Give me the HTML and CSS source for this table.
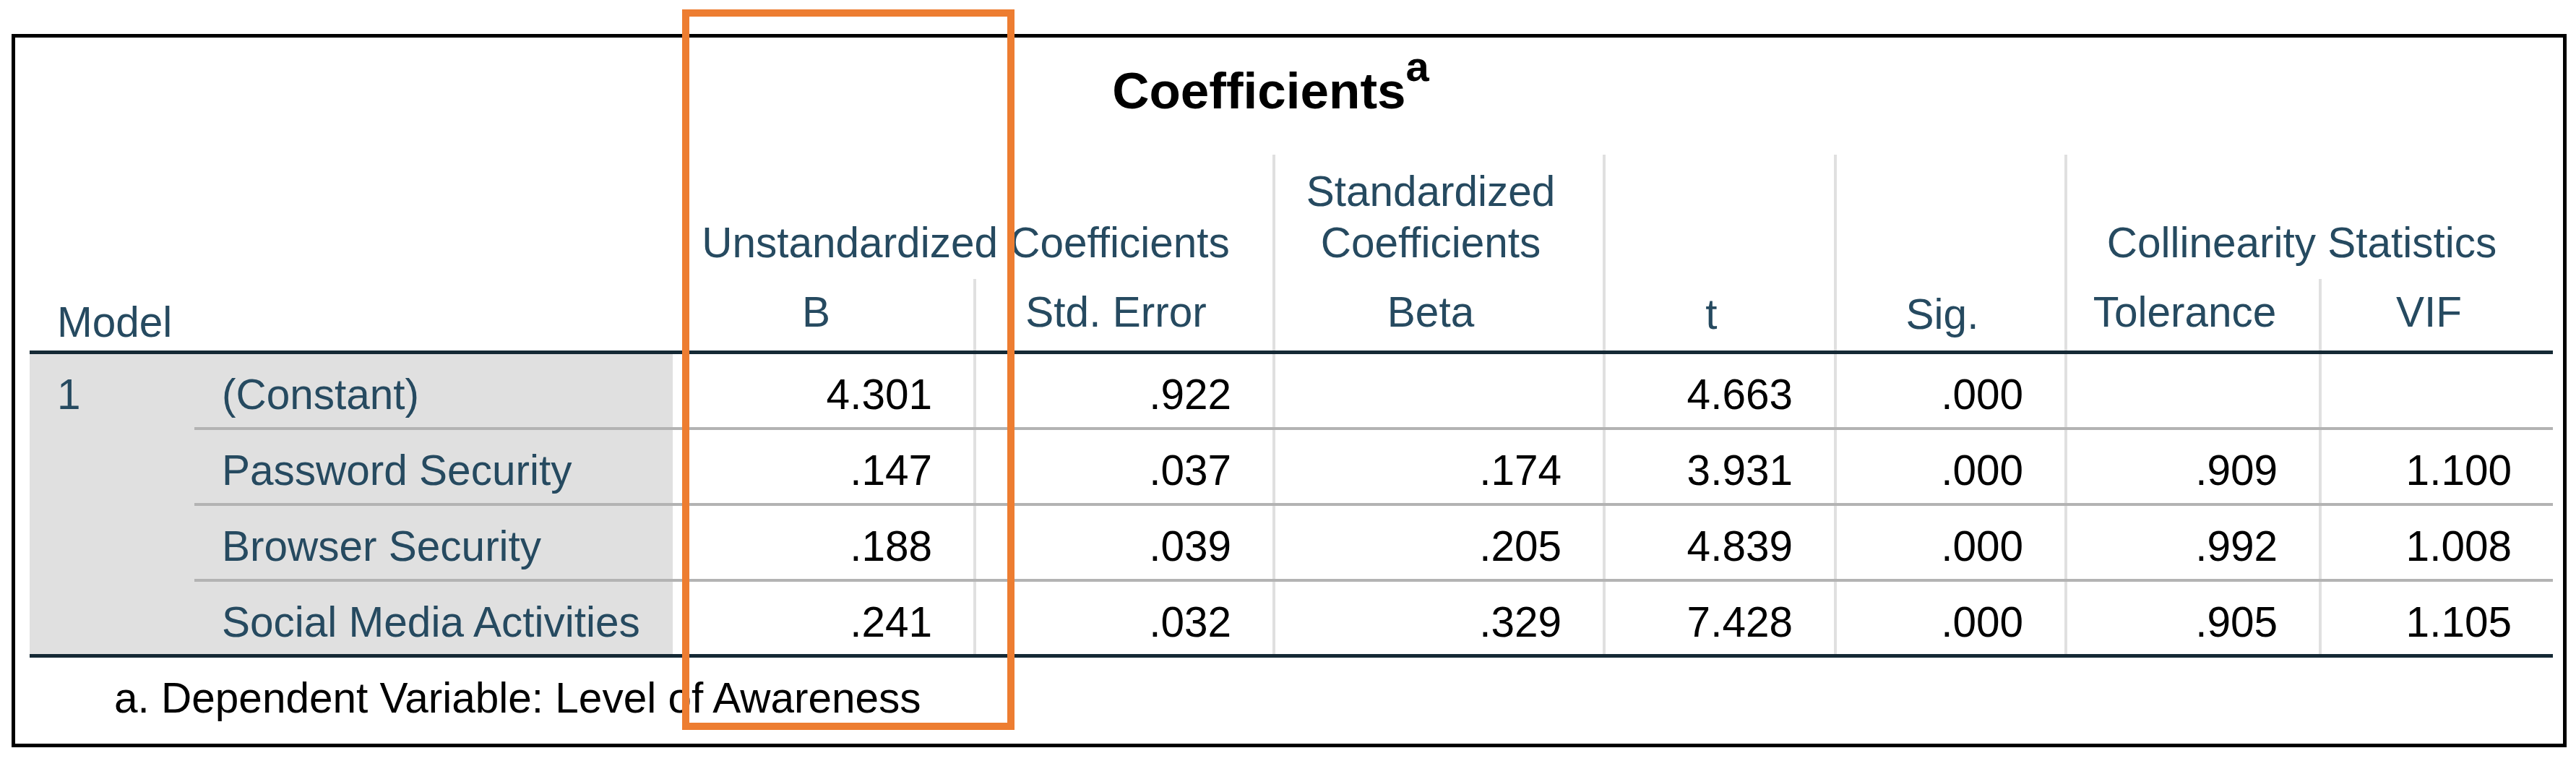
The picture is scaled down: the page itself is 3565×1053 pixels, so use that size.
FILE: index.html
```html
<!DOCTYPE html>
<html lang="en">
<head>
<meta charset="utf-8">
<title>Coefficients</title>
<link rel="stylesheet" href="styles.css">
</head>
<body>
<div class="page">
  <div class="frame">
    <div class="title">Coefficients<span class="fn">a</span></div>
    <div class="grid">
      <div class="h model">Model</div>
      <div class="h unstd">Unstandardized Coefficients</div>
      <div class="h std vl">Standardized<br>Coefficients</div>
      <div class="h tcol vl">t</div>
      <div class="h sig vl">Sig.</div>
      <div class="h coll vl">Collinearity Statistics</div>
      <div class="h sub cb">B</div>
      <div class="h sub cse vl">Std. Error</div>
      <div class="h sub cbeta vl">Beta</div>
      <div class="h sub ctol vl">Tolerance</div>
      <div class="h sub cvif vl">VIF</div>
      <div class="mnum">1</div>
      <div class="row first">
        <div class="lab">(Constant)</div>
        <div>4.301</div>
        <div class="vl">.922</div>
        <div class="vl"></div>
        <div class="vl">4.663</div>
        <div class="vl">.000</div>
        <div class="vl"></div>
        <div class="vl"></div>
      </div>
      <div class="row">
        <div class="lab">Password Security</div>
        <div>.147</div>
        <div class="vl">.037</div>
        <div class="vl">.174</div>
        <div class="vl">3.931</div>
        <div class="vl">.000</div>
        <div class="vl">.909</div>
        <div class="vl">1.100</div>
      </div>
      <div class="row">
        <div class="lab">Browser Security</div>
        <div>.188</div>
        <div class="vl">.039</div>
        <div class="vl">.205</div>
        <div class="vl">4.839</div>
        <div class="vl">.000</div>
        <div class="vl">.992</div>
        <div class="vl">1.008</div>
      </div>
      <div class="row last">
        <div class="lab">Social Media Activities</div>
        <div>.241</div>
        <div class="vl">.032</div>
        <div class="vl">.329</div>
        <div class="vl">7.428</div>
        <div class="vl">.000</div>
        <div class="vl">.905</div>
        <div class="vl">1.105</div>
      </div>
    </div>
    <div class="foot">a. Dependent Variable: Level of Awareness</div>
  </div>
  <div class="mark"></div>
</div>
</body>
</html>
```

FILE: styles.css
```css
* {
  box-sizing: border-box;
  margin: 0;
  padding: 0;
}

body {
  margin: 0;
  background: #ffffff;
  font-family: "Liberation Sans", Arial, sans-serif;
  font-variant-ligatures: none;
}

.page {
  position: relative;
  width: 3565px;
  height: 1053px;
  padding: 47px 0 0 16px;
}

.frame {
  width: 3536px;
  height: 987px;
  border: 5px solid #000000;
}

.title {
  height: 162px;
  margin: 0 14px 0 20px;
  padding: 34px 57px 0 0;
  text-align: center;
  font-weight: 700;
  font-size: 71px;
  line-height: 80px;
  color: #000000;
}

.fn {
  font-size: 58px;
  line-height: 0;
  vertical-align: 38px;
}

.grid {
  display: grid;
  margin-left: 20px;
  width: 3492px;
  grid-template-columns: 228px 662px 416px 414px 457px 320px 319px 352px 324px;
  grid-template-rows: 172px 99px 106px 105px 105px 109px;
  font-size: 58.5px;
  line-height: 71px;
}

.vl {
  background: linear-gradient(#e0e0e0, #e0e0e0) left top / 4px 100% no-repeat border-box;
}

/* header cells */
.h {
  display: flex;
  flex-direction: column;
  justify-content: flex-end;
  padding: 0 57px 15px 38px;
  color: #264a60;
  text-align: center;
  white-space: nowrap;
}

.sub {
  padding-bottom: 18px;
}

.model {
  grid-column: 1 / 3;
  grid-row: 1 / 3;
  text-align: left;
  padding-bottom: 4px;
}

.unstd { grid-column: 3 / 5; grid-row: 1; }
.std   { grid-column: 5; grid-row: 1; }
.tcol  { grid-column: 6; grid-row: 1 / 3; }
.sig   { grid-column: 7; grid-row: 1 / 3; }
.coll  { grid-column: 8 / 10; grid-row: 1; }
.cb    { grid-column: 3; grid-row: 2; }
.cse   { grid-column: 4; grid-row: 2; }
.cbeta { grid-column: 5; grid-row: 2; }
.ctol  { grid-column: 8; grid-row: 2; }
.cvif  { grid-column: 9; grid-row: 2; }

/* body cells */
.mnum {
  grid-column: 1;
  grid-row: 3 / 7;
  padding: 20px 57px 0 38px;
  background-color: #e0e0e0;
  color: #264a60;
  border-top: 5px solid #152935;
  border-bottom: 5px solid #152935;
}

.row {
  display: contents;
}

.row > div {
  padding: 20px 57px 0 38px;
  border-top: 4px solid #b3b3b3;
  text-align: right;
  color: #000000;
  white-space: nowrap;
}

.row.first > div {
  border-top: 5px solid #152935;
}

.row.last > div {
  border-bottom: 5px solid #152935;
}

.row > .lab {
  text-align: left;
  color: #264a60;
  background-color: #e0e0e0;
}

.foot {
  height: 119px;
  margin-left: 20px;
  padding: 20px 0 0 117px;
  font-size: 58.5px;
  line-height: 71px;
  color: #000000;
  white-space: nowrap;
}

.mark {
  position: absolute;
  left: 944px;
  top: 13px;
  width: 460px;
  height: 997px;
  border: 10px solid #ed7d31;
}
```
